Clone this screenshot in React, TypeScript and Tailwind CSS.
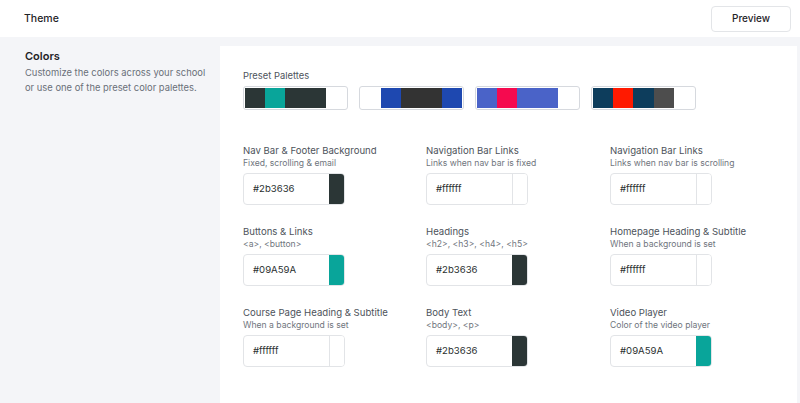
const palettes = [
  ['#2b3636', '#09a59a', '#2b3636', '#2b3636', '#ffffff'],
  ['#ffffff', '#1e48b0', '#333333', '#333333', '#1e48b0'],
  ['#4a63c8', '#f50a4f', '#4a63c8', '#4a63c8', '#ffffff'],
  ['#0d3d5c', '#ff1a00', '#0d3d5c', '#4d4d4d', '#ffffff'],
];

const fields = [
  { label: 'Nav Bar & Footer Background', sub: 'Fixed, scrolling & email', value: '#2b3636', color: '#2b3636' },
  { label: 'Navigation Bar Links', sub: 'Links when nav bar is fixed', value: '#ffffff', color: '#ffffff' },
  { label: 'Navigation Bar Links', sub: 'Links when nav bar is scrolling', value: '#ffffff', color: '#ffffff' },
  { label: 'Buttons & Links', sub: '<a>, <button>', value: '#09A59A', color: '#09a59a' },
  { label: 'Headings', sub: '<h2>, <h3>, <h4>, <h5>', value: '#2b3636', color: '#2b3636' },
  { label: 'Homepage Heading & Subtitle', sub: 'When a background is set', value: '#ffffff', color: '#ffffff' },
  { label: 'Course Page Heading & Subtitle', sub: 'When a background is set', value: '#ffffff', color: '#ffffff' },
  { label: 'Body Text', sub: '<body>, <p>', value: '#2b3636', color: '#2b3636' },
  { label: 'Video Player', sub: 'Color of the video player', value: '#09A59A', color: '#09a59a' },
];

const ColorField = ({ label, sub, value, color }: { label: string; sub: string; value: string; color: string }) => {
  const isWhite = color === '#ffffff';
  return (
    <div>
      <div className="text-[9.6px] leading-[13px] text-[#4d535b]">{label}</div>
      <div className="text-[8.6px] leading-[12px] text-[#6f757d]">{sub}</div>
      <div className="mt-[4px] flex h-[32px] w-[102px] rounded-[4px] border border-[#e2e4e7] bg-white">
        <div className="flex flex-1 items-center pl-[9px] text-[9.6px] text-[#2b3030]">{value}</div>
        <div
          className={`w-[15px] rounded-r-[3px] ${isWhite ? 'border-l border-[#e2e4e7]' : ''}`}
          style={{ backgroundColor: color }}
        />
      </div>
    </div>
  );
};

const App = () => {
  return (
    <div
      className="h-[403px] w-[800px] overflow-hidden bg-[#f4f5f8]"
      style={{ fontFamily: 'Inter, "Noto Sans", sans-serif' }}
    >
      <div className="flex h-[37px] items-center justify-between bg-white pl-6 pr-[9px]">
        <span className="text-[10.5px] font-medium text-[#1f2428]">Theme</span>
        <button className="h-[26px] w-[80px] rounded-[4px] border border-[#e3e5e8] bg-white text-[10px] font-medium text-[#1f2428]">
          Preview
        </button>
      </div>

      <div className="flex pt-[9px]">
        <div className="w-[220px] shrink-0 pl-[25px] pt-[2px]">
          <h2 className="text-[11px] font-semibold leading-[16px] text-[#1f2428]">Colors</h2>
          <p className="mt-[1px] text-[9.4px] leading-[15px] text-[#6a7078]">
            Customize the colors across your school
            <br />
            or use one of the preset color palettes.
          </p>
        </div>

        <div className="mr-[3px] h-[400px] flex-1 bg-white pl-[23px] pt-[23px]">
          <div className="text-[9.4px] leading-[14px] text-[#4d535b]">Preset Palettes</div>
          <div className="mt-[3px] flex gap-[11px]">
            {palettes.map((p, i) => (
              <div key={i} className="grid h-[24px] w-[105px] grid-cols-5 rounded-[3px] border border-[#d6d9de] p-[1px]">
                {p.map((c, j) => (
                  <div key={j} style={{ backgroundColor: c }} />
                ))}
              </div>
            ))}
          </div>

          <div className="mt-[34px] grid grid-cols-[183px_184px_1fr] gap-y-[20px]">
            {fields.map((f, i) => (
              <ColorField key={i} {...f} />
            ))}
          </div>
        </div>
      </div>
    </div>
  );
};

export default App;
